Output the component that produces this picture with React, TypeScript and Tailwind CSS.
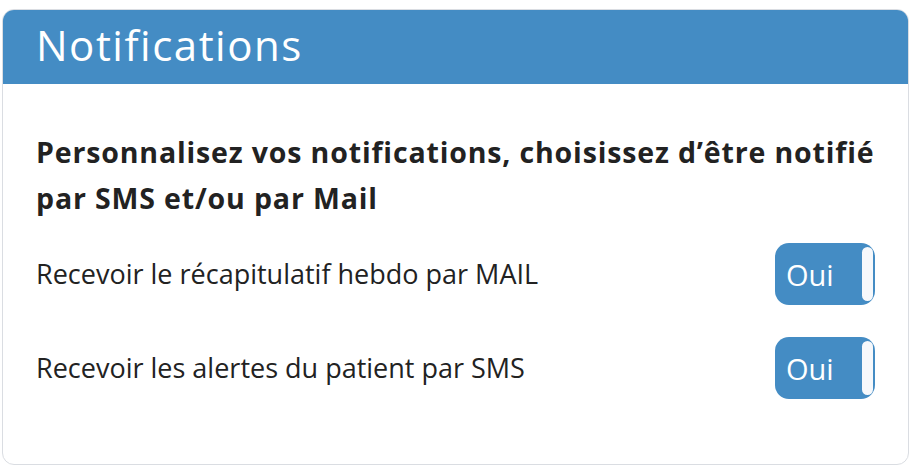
import React from "react";

function Toggle() {
  return (
    <div className="relative flex h-[62px] w-[100px] shrink-0 items-center rounded-[14px] bg-[#448cc4] pl-[11px]">
      <span className="text-[29px] leading-none text-white">Oui</span>
      <div className="absolute right-[2px] top-[4px] h-[54px] w-[11px] rounded-full bg-[#f6f8fb]" />
    </div>
  );
}

export default function App() {
  return (
    <div className="h-[466px] w-[916px] bg-white pl-[2px] pt-[9px]" style={{ fontFamily: '"Open Sans", "Lato", sans-serif' }}>
      <div className="w-[907px] h-[456px] overflow-hidden rounded-[12px] border border-[#dadde2]">
        <div className="flex h-[74px] items-center bg-[#448cc4] px-[33px] pb-[4px]">
          <h1 className="text-[42px] leading-none tracking-[1.5px] text-white">Notifications</h1>
        </div>
        <div className="px-[33px] pt-[45px]">
          <p className="text-[28.5px] font-bold leading-[46px] tracking-[0.85px] text-[#222]">
            Personnalisez vos notifications, choisissez d’être notifié par SMS et/ou par Mail
          </p>
          <div className="mt-[22px] flex items-center justify-between">
            <span className="text-[27px] text-[#222]">Recevoir le récapitulatif hebdo par MAIL</span>
            <Toggle />
          </div>
          <div className="mt-[32px] flex items-center justify-between">
            <span className="text-[27px] text-[#222]">Recevoir les alertes du patient par SMS</span>
            <Toggle />
          </div>
        </div>
      </div>
    </div>
  );
}
